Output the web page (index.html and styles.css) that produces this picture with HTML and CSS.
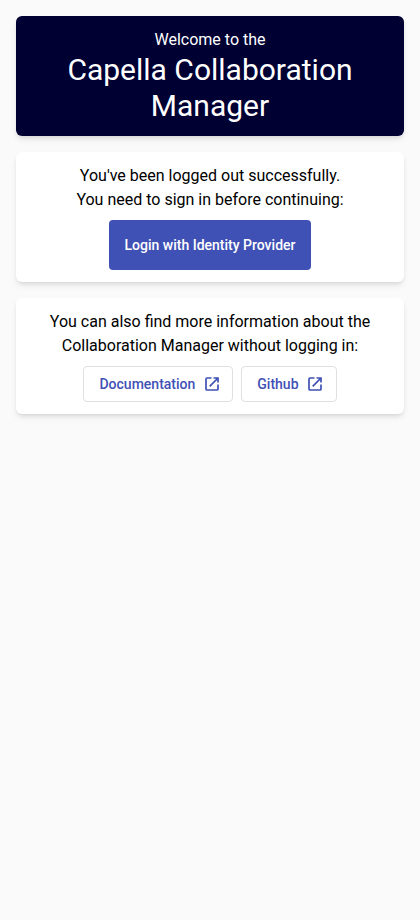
FILE: index.html
```html
<!DOCTYPE html>
<html lang="en">
<head>
<meta charset="utf-8">
<title>Capella Collaboration Manager</title>
<link rel="stylesheet" href="styles.css">
</head>
<body>
<main class="page">
  <header class="card banner">
    <div>Welcome to the</div>
    <h1 class="title">Capella Collaboration Manager</h1>
  </header>
  <section class="card login">
    <div>You've been logged out successfully.</div>
    <div>You need to sign in before continuing:</div>
    <button class="btn primary">Login with Identity Provider</button>
  </section>
  <section class="card info">
    <div>You can also find more information about the Collaboration Manager without logging in:</div>
    <div class="links">
      <a class="btn outlined">Documentation
        <svg class="icon" viewBox="0 0 18 18"><path d="M8.5 3H4Q3 3 3 4V14Q3 15 4 15H14Q15 15 15 14V9.5M10.5 3H15v4.5M15 3L6.7 11.3"/></svg>
      </a>
      <a class="btn outlined">Github
        <svg class="icon" viewBox="0 0 18 18"><path d="M8.5 3H4Q3 3 3 4V14Q3 15 4 15H14Q15 15 15 14V9.5M10.5 3H15v4.5M15 3L6.7 11.3"/></svg>
      </a>
    </div>
  </section>
</main>
</body>
</html>
```
FILE: styles.css
```css
* { box-sizing: border-box; }
body {
  margin: 0;
  background: #fafafa;
  color: #000;
  font: 400 16px/24px Roboto, sans-serif;
}
.page {
  display: flex;
  flex-direction: column;
  gap: 16px;
  padding: 16px;
}
.card {
  padding: 12px 16px;
  border-radius: 6px;
  background: #fff;
  text-align: center;
  box-shadow: 0 4px 6px -1px rgba(0, 0, 0, .1), 0 2px 4px -2px rgba(0, 0, 0, .1);
}
.banner {
  background: #000033;
  color: #fff;
}
.title {
  margin: 0;
  font-size: 30px;
  line-height: 36px;
  font-weight: 400;
}
.btn {
  display: inline-flex;
  align-items: center;
  justify-content: center;
  border: 0;
  border-radius: 4px;
  font: 500 14px/20px Roboto, sans-serif;
  letter-spacing: 0;
}
.login { height: 130px; }
.primary {
  width: 202px;
  height: 50px;
  margin-top: 8px;
  padding: 0;
  background: #3f51b5;
  color: #fff;
}
.info { height: 116px; }
.links {
  display: flex;
  justify-content: center;
  gap: 8px;
  margin-top: 8px;
}
.outlined {
  height: 36px;
  padding: 0 11.5px 0 15px;
  gap: 7.5px;
  border: 1px solid #e0e0e0;
  color: #3f51b5;
}
.icon {
  width: 18px;
  height: 18px;
  fill: none;
  stroke: currentColor;
  stroke-width: 1.7;
}
```
